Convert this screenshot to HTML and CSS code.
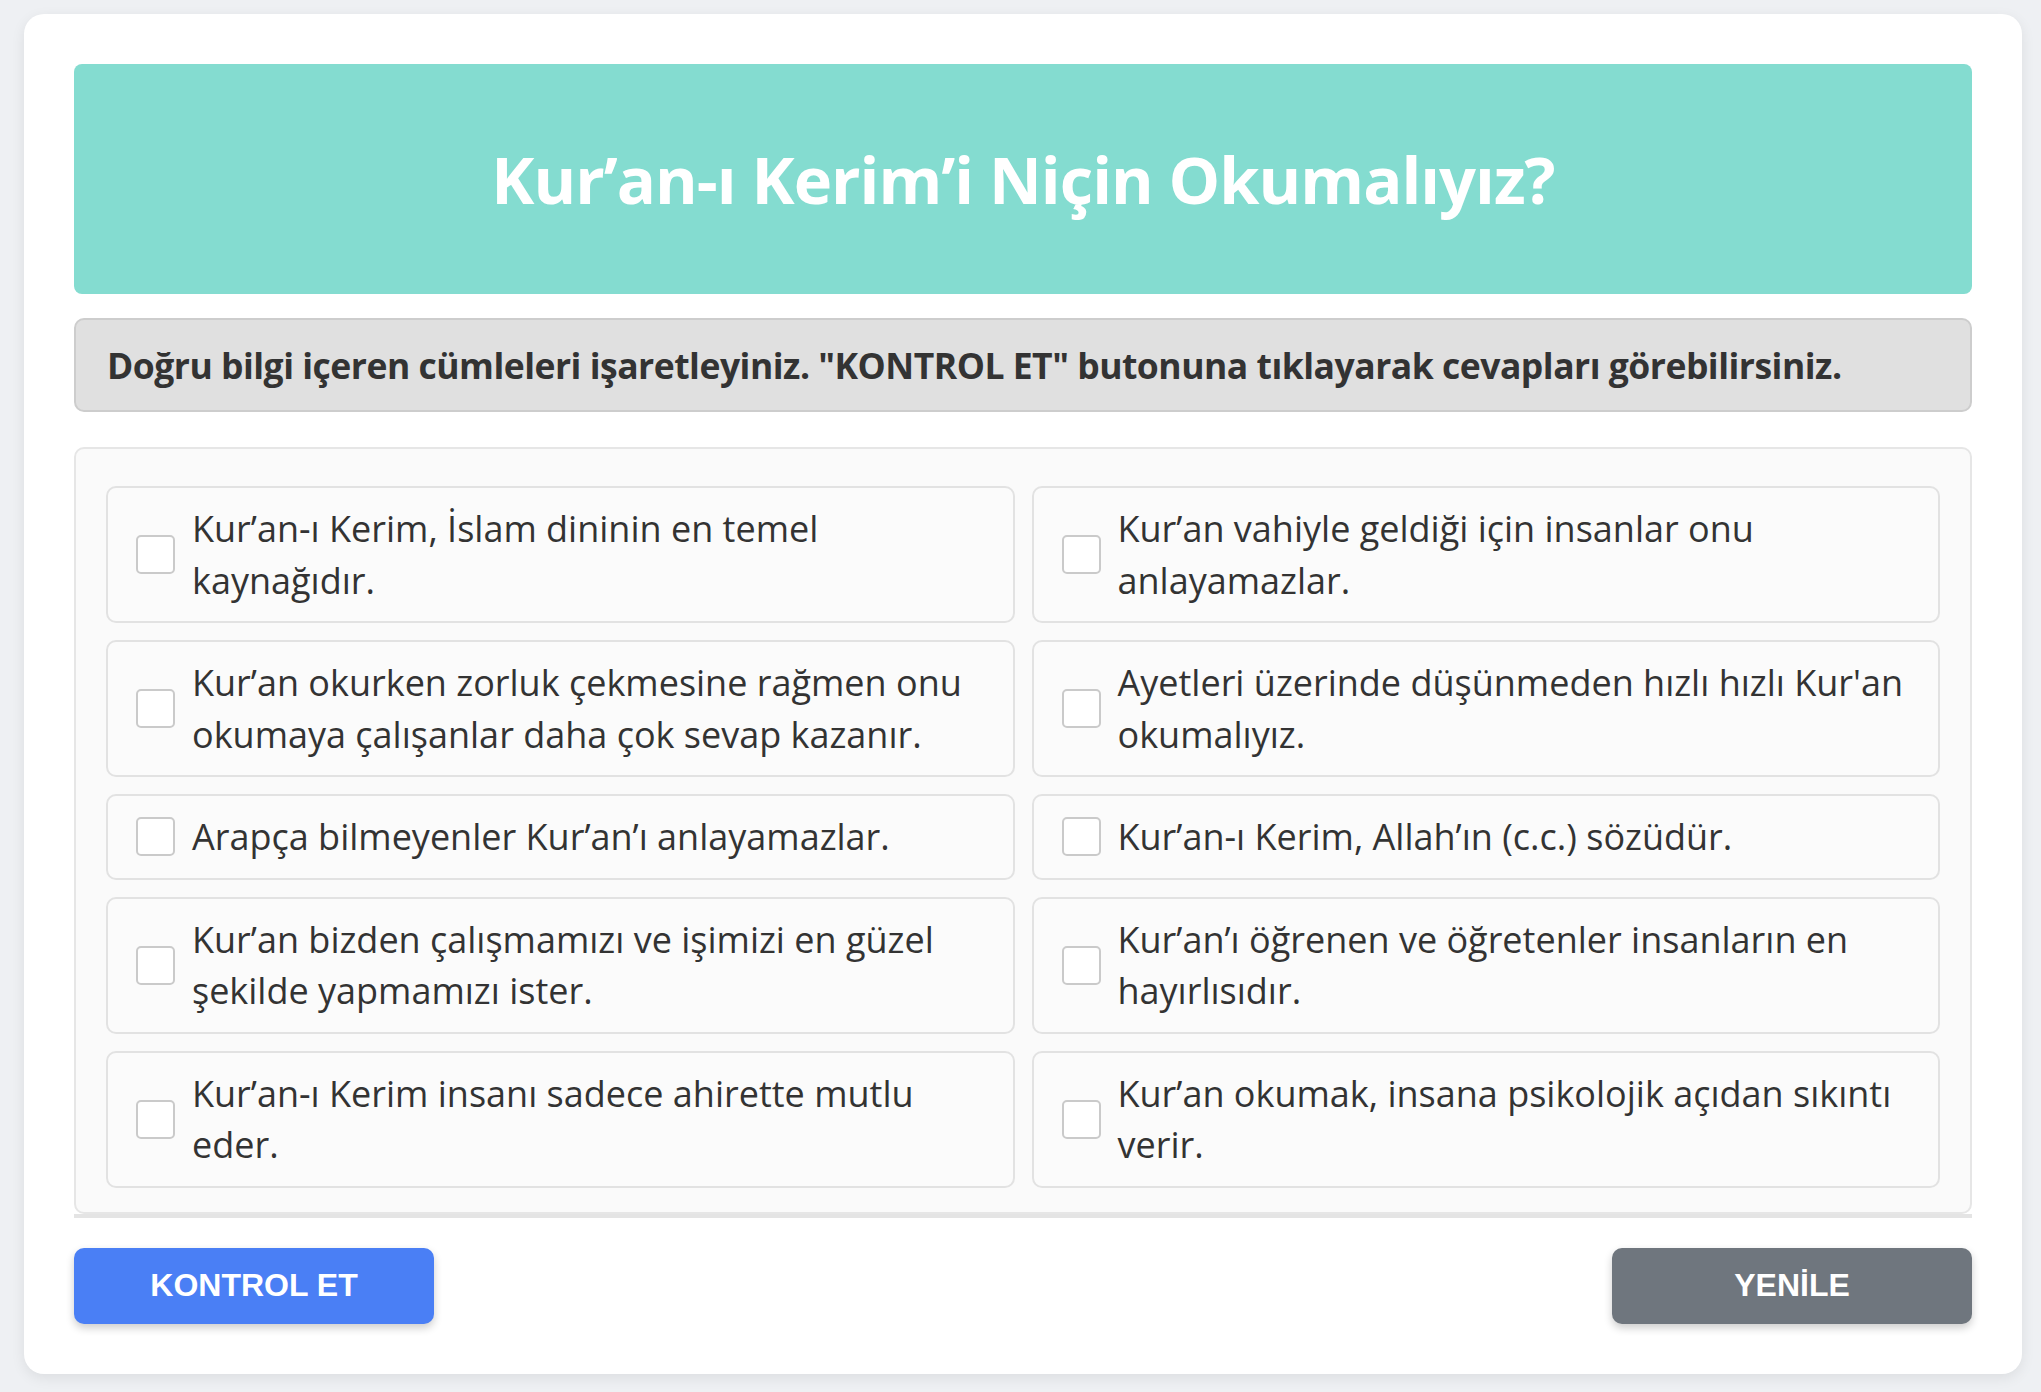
FILE: index.html
```
<!DOCTYPE html>
<html lang="tr">
<head>
    <meta charset="UTF-8">
    <meta name="viewport" content="width=device-width, initial-scale=1.0">
    <title>Kur’an-ı Kerim’i Niçin Okumalıyız?</title>
    <link rel="stylesheet" href="styles.css">
</head>
<body>
    <div class="quiz-card">
        <div class="quiz-header">
            <h1>Kur’an-ı Kerim’i Niçin Okumalıyız?</h1>
        </div>

        <div class="instructions">
            Doğru bilgi içeren cümleleri işaretleyiniz. "KONTROL ET" butonuna tıklayarak cevapları görebilirsiniz.
        </div>

        <div class="options-wrap">
            <div class="options">
                <label class="option" data-correct="1">
                    <input type="checkbox">
                    <span>Kur’an-ı Kerim, İslam dininin en temel kaynağıdır.</span>
                </label>
                <label class="option" data-correct="0">
                    <input type="checkbox">
                    <span>Kur’an vahiyle geldiği için insanlar onu anlayamazlar.</span>
                </label>
                <label class="option" data-correct="1">
                    <input type="checkbox">
                    <span>Kur’an okurken zorluk çekmesine rağmen onu okumaya çalışanlar daha çok sevap kazanır.</span>
                </label>
                <label class="option" data-correct="0">
                    <input type="checkbox">
                    <span>Ayetleri üzerinde düşünmeden hızlı hızlı Kur'an okumalıyız.</span>
                </label>
                <label class="option" data-correct="0">
                    <input type="checkbox">
                    <span>Arapça bilmeyenler Kur’an’ı anlayamazlar.</span>
                </label>
                <label class="option" data-correct="1">
                    <input type="checkbox">
                    <span>Kur’an-ı Kerim, Allah’ın (c.c.) sözüdür.</span>
                </label>
                <label class="option" data-correct="1">
                    <input type="checkbox">
                    <span>Kur’an bizden çalışmamızı ve işimizi en güzel şekilde yapmamızı ister.</span>
                </label>
                <label class="option" data-correct="1">
                    <input type="checkbox">
                    <span>Kur’an’ı öğrenen ve öğretenler insanların en hayırlısıdır.</span>
                </label>
                <label class="option" data-correct="0">
                    <input type="checkbox">
                    <span>Kur’an-ı Kerim insanı sadece ahirette mutlu eder.</span>
                </label>
                <label class="option" data-correct="0">
                    <input type="checkbox">
                    <span>Kur’an okumak, insana psikolojik açıdan sıkıntı verir.</span>
                </label>
            </div>
        </div>

        <div class="actions">
            <button class="btn btn-check" id="checkBtn">KONTROL ET</button>
            <button class="btn btn-reset" id="resetBtn">YENİLE</button>
        </div>
    </div>

    <script>
        const options = document.querySelectorAll('.option');

        // Cevaplari kontrol et
        document.getElementById('checkBtn').addEventListener('click', function() {
            options.forEach(function(option) {
                const checked = option.querySelector('input').checked;
                const correct = option.dataset.correct === '1';
                option.classList.remove('right', 'wrong');
                if (checked === correct) {
                    option.classList.add('right');
                } else {
                    option.classList.add('wrong');
                }
            });
        });

        // Her seyi sifirla
        document.getElementById('resetBtn').addEventListener('click', function() {
            options.forEach(function(option) {
                option.querySelector('input').checked = false;
                option.classList.remove('right', 'wrong');
            });
        });
    </script>
</body>
</html>
```

FILE: styles.css
```
body {
    font-family: "Open Sans", Arial, sans-serif;
    margin: 0;
    padding: 14px 19px 19px 24px;
    background-color: #eef0f3;
    color: #333;
}
.quiz-card {
    background: #fff;
    border-radius: 20px;
    padding: 50px;
    box-shadow: 0 4px 14px rgba(0, 0, 0, 0.08);
}
.quiz-header {
    background-color: #84dcd0;
    border-radius: 8px;
    padding: 75px 20px;
    text-align: center;
}
.quiz-header h1 {
    margin: 0;
    color: #fff;
    font-size: 65px;
    font-weight: 700;
    line-height: 80px;
    letter-spacing: -1px;
}
.instructions {
    margin-top: 24px;
    background-color: #e0e0e0;
    border: 2px solid #cdcdcd;
    border-radius: 10px;
    padding: 20px 31px;
    font-size: 35.5px;
    font-weight: 700;
    line-height: 50px;
    letter-spacing: -0.5px;
    color: #333;
}
.options-wrap {
    margin-top: 35px;
    border-bottom: 4px solid #e4e4e4;
}
.options {
    background: #fafafa;
    border: 2px solid #e6e6e6;
    border-radius: 10px;
    padding: 37px 30px 24px;
    display: grid;
    grid-template-columns: 1fr 1fr;
    gap: 17px 17px;
}
.option {
    display: flex;
    align-items: center;
    gap: 17px;
    background: #fbfbfb;
    border: 2px solid #e2e2e2;
    border-radius: 10px;
    padding: 15px 28px;
    font-size: 36px;
    line-height: 51.5px;
    color: #333;
    cursor: pointer;
}
.option input {
    appearance: none;
    -webkit-appearance: none;
    flex-shrink: 0;
    width: 39px;
    height: 39px;
    margin: 0;
    background: #fff;
    border: 2px solid #cacaca;
    border-radius: 5px;
    cursor: pointer;
}
.option input:checked {
    background: #4a7ff5;
    border-color: #4a7ff5;
}
.option.right {
    background: #e3f7ea;
    border-color: #7fd39a;
}
.option.wrong {
    background: #fde6e6;
    border-color: #ec9a9a;
}
.actions {
    display: flex;
    justify-content: space-between;
    margin-top: 30px;
}
.btn {
    width: 360px;
    height: 76px;
    border: none;
    border-radius: 10px;
    color: #fff;
    font-family: "Liberation Sans", Arial, sans-serif;
    font-size: 32px;
    font-weight: 700;
    cursor: pointer;
    box-shadow: 0 4px 8px rgba(0, 0, 0, 0.2);
}
.btn-check {
    background: #4a7ff5;
}
.btn-reset {
    background: #6f767e;
}
```
